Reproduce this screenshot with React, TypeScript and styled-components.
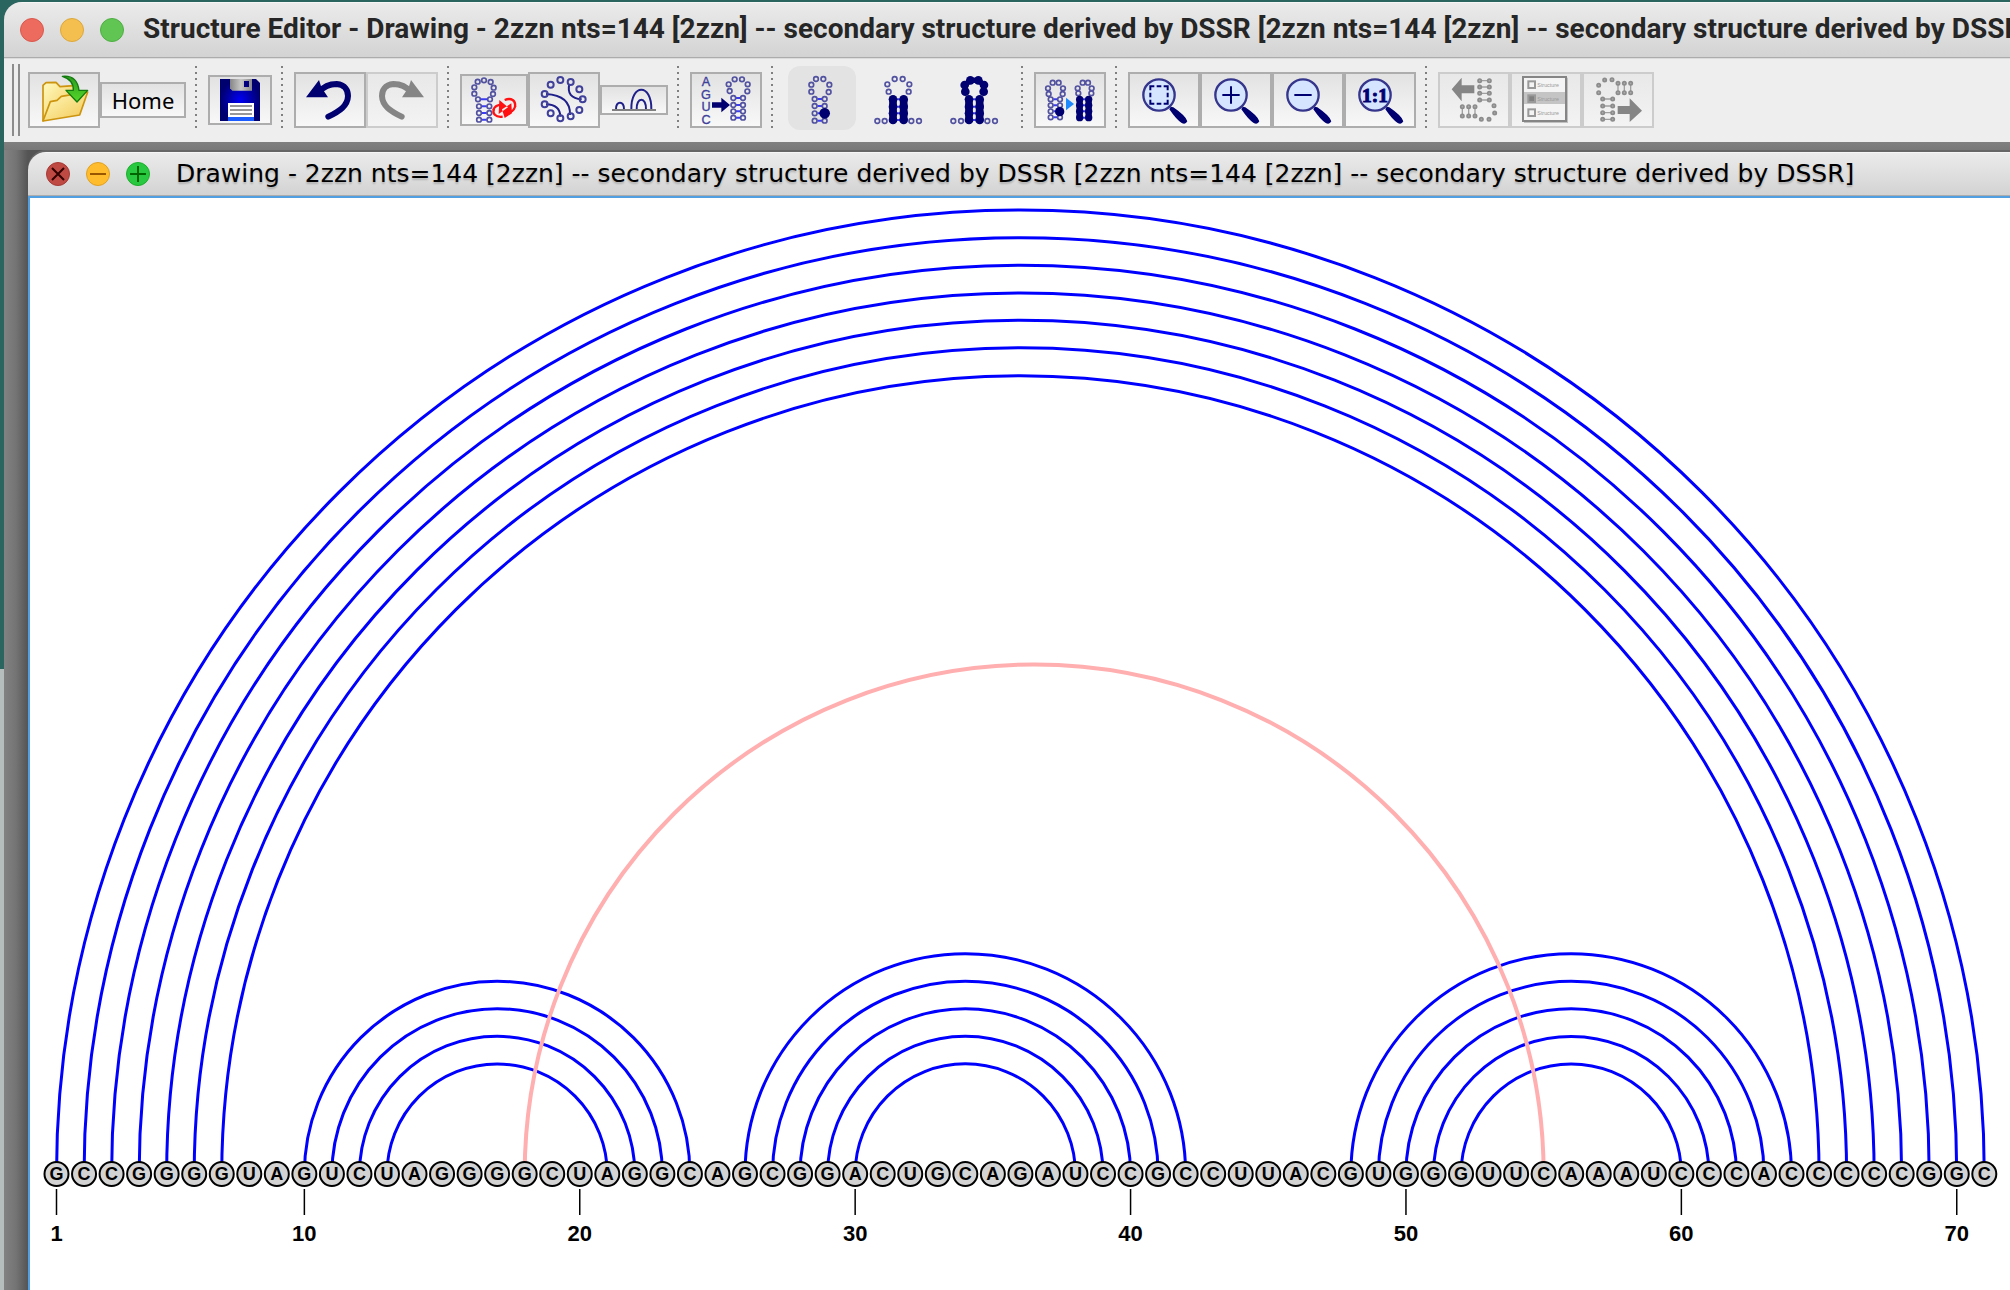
import React from "react";
import styled, { createGlobalStyle, css } from "styled-components";

const NAVY = "#000070";
const BEAD = "#5252a0";
const RUNG = "#3c3cf0";
const GREY = "#858585";

const GlobalStyle = createGlobalStyle`
  * { box-sizing: border-box; }
  body { margin: 0; overflow: hidden; }
`;

/* ---------- shell ---------- */

const Desktop = styled.div`
  display: flex;
  height: 100vh;
  padding: 2px 0 0 4px;
  background: linear-gradient(#2a6560 0 669px, #b6bdbd 669px);
  overflow: hidden;
`;

const AppWindow = styled.main`
  display: flex;
  flex-direction: column;
  flex: 1;
  min-width: 0;
  border-top-left-radius: 18px;
  background: #808080;
  overflow: hidden;
`;

const TitleBar = styled.header<{ $inner?: boolean }>`
  display: flex;
  align-items: center;
  gap: 16px;
  flex: none;
  height: ${(p) => (p.$inner ? 44 : 56)}px;
  padding-left: ${(p) => (p.$inner ? 18 : 16)}px;
  border-top: 1px solid #f6f6f6;
  border-bottom: 1px solid #acacac;
  background: linear-gradient(#ebebeb, #d3d3d3);
  overflow: hidden;
`;

const Light = styled.button<{ $fill: string; $edge: string }>`
  flex: none;
  display: grid;
  width: 24px;
  height: 24px;
  padding: 0;
  border: 1px solid ${(p) => p.$edge};
  border-radius: 50%;
  background: ${(p) => p.$fill};
`;

const WindowTitle = styled.h1`
  margin: 0 0 2px 3px;
  font: 700 28px/32px Roboto, "Liberation Sans", sans-serif;
  color: #262626;
  white-space: nowrap;
`;

const FrameTitle = styled.h2`
  margin: 0 0 0 10px;
  font: 400 25px/32px "DejaVu Sans", "Noto Sans", sans-serif;
  color: #000;
  text-shadow: 0 2px 2px rgba(0, 0, 0, 0.2);
  white-space: nowrap;
`;

/* ---------- toolbar ---------- */

const Toolbar = styled.div`
  display: flex;
  align-items: center;
  flex: none;
  height: 84px;
  padding: 0 0 1px 8px;
  border-top: 1px solid #dcdcdc;
  background: #eee;
`;

const Grip = styled.div`
  flex: none;
  width: 8px;
  height: 72px;
  margin-right: 8px;
  border: solid #8c8c8c;
  border-width: 0 2px;
`;

const Divider = styled.div`
  flex: none;
  width: 2px;
  height: 62px;
  margin: 0 11px 6px 9px;
  background: repeating-linear-gradient(#808080 0 2px, transparent 2px 6px);
`;

const Group = styled.div`
  display: flex;
  align-items: center;
  flex: none;
`;

const ModeGroup = styled(Group)`
  gap: 8px;
  margin: 0 4px 4px;
`;

const iconFill = css`
  & > svg { display: block; width: 100%; height: 100%; }
`;

const ToolButton = styled.button<{ $w?: number; $h?: number }>`
  flex: none;
  width: ${(p) => p.$w ?? 72}px;
  height: ${(p) => p.$h ?? 56}px;
  padding: 0;
  border: 2px solid #adadad;
  background: linear-gradient(#e2e2e2, #f8f8f8);
  font: 400 22px/28px "Noto Sans", "Open Sans", sans-serif;
  color: #000;
  ${iconFill}
  &:disabled { border-color: #cccccc; background: linear-gradient(#e8e8e8, #f3f3f3); }
`;

const ModeButton = styled.button<{ $on?: boolean }>`
  flex: none;
  width: 68px;
  height: 64px;
  padding: 0;
  border: 0;
  border-radius: 12px;
  background: ${(p) => (p.$on ? "#e3e3e3" : "transparent")};
  ${iconFill}
`;

/* ---------- document frame ---------- */

const Workspace = styled.section`
  display: flex;
  flex: 1;
  min-height: 0;
  padding: 10px 0 0 24px;
  background:
    linear-gradient(#808080, #787878) top / 100% 8px no-repeat,
    linear-gradient(90deg, #828282, #747474 12px, #545454 24px);
`;

const Frame = styled.article`
  display: flex;
  flex-direction: column;
  flex: 1;
  min-width: 0;
  border-top-left-radius: 18px;
  box-shadow: 0 -2px 0 #666;
  overflow: hidden;
`;

const Canvas = styled.div`
  flex: 1;
  min-height: 0;
  border: solid #519fe0;
  border-width: 2px 0 0 2px;
  background: #fff;
  overflow: hidden;
  & > svg { display: block; }
`;

const BaseLetter = styled.text`
  font: 700 18px "Liberation Sans", Arial, sans-serif;
  text-anchor: middle;
`;

const IndexLabel = styled.text`
  font: 700 22px "Liberation Sans", Arial, sans-serif;
  text-anchor: middle;
`;

/* ---------- icon parts ---------- */

type Pt = [number, number];

const Beads = ({ at, r = 7, color = BEAD, fill = "none", w = 5 }: { at: Pt[]; r?: number; color?: string; fill?: string; w?: number }) => (
  <g fill={fill} stroke={color} strokeWidth={w}>
    {at.map(([x, y]) => <circle key={`${x},${y}`} cx={x} cy={y} r={r} />)}
  </g>
);

const Rungs = ({ x1, x2, ys, color = RUNG }: { x1: number; x2: number; ys: number[]; color?: string }) => (
  <g stroke={color} strokeWidth="6">
    {ys.map((y) => <path key={y} d={`M${x1} ${y}H${x2}`} />)}
  </g>
);

const Stem = ({ x1, x2, ys }: { x1: number; x2: number; ys: number[] }) => (
  <>
    <Rungs x1={x1 + 8} x2={x2 - 8} ys={ys} />
    <Beads at={ys.flatMap((y): Pt[] => [[x1, y], [x2, y]])} />
  </>
);

const SolidStem = ({ x1, x2, ys, r }: { x1: number; x2: number; ys: number[]; r: number }) => (
  <>
    <path d={`M${x1} ${ys[0]}V${ys[ys.length - 1]}M${x2} ${ys[0]}V${ys[ys.length - 1]}`} stroke={NAVY} strokeWidth={r * 2 - 3} />
    <Rungs x1={x1} x2={x2} ys={ys} />
    <Beads at={ys.flatMap((y): Pt[] => [[x1, y], [x2, y]])} r={r} color="none" fill={NAVY} />
  </>
);

const OpenIcon = () => (
  <svg viewBox="90 222 204 156" aria-hidden="true">
    <defs>
      <linearGradient id="folder" x1="0" y1="0" x2="1" y2="1">
        <stop offset="0" stopColor="#fffbc0" /><stop offset="1" stopColor="#f2c652" />
      </linearGradient>
      <linearGradient id="arrow" x1="0" y1="0" x2="0" y2="1">
        <stop offset="0" stopColor="#2c9c1e" /><stop offset="1" stopColor="#55d92a" />
      </linearGradient>
    </defs>
    <g stroke="#cc940f" strokeWidth="5" strokeLinejoin="round">
      <path d="M129 362V256l9-8 30-1 12 13 42-3 4 20-66 70z" fill="url(#folder)" />
      <path d="M129 363l22-58 20-4 13-12 79-13-24 69z" fill="url(#folder)" />
    </g>
    <path d="M187 229c28-3 46 12 50 42h26l-32 35-33-35h22c1-18-8-34-33-42z" fill="url(#arrow)" stroke="#127a0e" strokeWidth="4" strokeLinejoin="round" />
  </svg>
);

const SaveIcon = () => (
  <svg viewBox="630 234 180 138" aria-hidden="true">
    <defs>
      <radialGradient id="disk"><stop offset="0" stopColor="#0000f5" /><stop offset="1" stopColor="#00006e" /></radialGradient>
      <linearGradient id="metal"><stop offset="0" stopColor="#858585" /><stop offset="0.5" stopColor="#c8c8c8" /><stop offset="1" stopColor="#8a8a8a" /></linearGradient>
    </defs>
    <path d="M660 240H768l12 12V366H660z" fill="url(#disk)" />
    <path d="M690 240H756V275H697l-7-7z" fill="url(#metal)" />
    <path d="M732 246h15v18h-15z" fill="#000080" />
    <path d="M684 312h78v42h-78z" fill="#fff" />
    <path d="M690 321h66M690 333h66M690 345h66" stroke="#777" strokeWidth="4" />
    <path d="M684 354h78v12h-78z" fill="#1a5cff" />
  </svg>
);

const TurnIcon = ({ color, flip }: { color: string; flip?: boolean }) => (
  <svg viewBox="888 222 204 156" aria-hidden="true">
    <g transform={flip ? "translate(2190 0) scale(-1 1)" : undefined}>
      <path d="M958 276C972 258 994 252 1010 252C1036 254 1044 272 1044 288C1043 318 1018 334 985 350" fill="none" stroke={color} strokeWidth="18" strokeLinecap="round" />
      <path d="M918 292L957 240L964 262L984 292z" fill={color} />
    </g>
  </svg>
);

const RefoldIcon = () => (
  <svg viewBox="66 78 192 144" fill="none" aria-hidden="true">
    <Beads at={[[113, 95], [132, 91], [152, 96], [161, 113], [159, 132], [150, 148], [103, 112], [103, 131], [114, 148]]} />
    <Rungs x1={122} x2={142} ys={[148]} />
    <Stem x1={117} x2={148} ys={[169, 189, 209]} />
    <g stroke="#f11" strokeWidth="7">
      <path d="M188 200C166 203 156 190 162 176" />
      <path d="M194 150C214 142 228 152 225 170" />
      <path d="M160 180C164 168 174 164 186 164" />
      <path d="M226 168C222 182 212 188 202 186" />
    </g>
    <path d="M178 150l26 22-28 20zM214 160l-28 18 8 26 22-14z" fill="#f11" />
  </svg>
);

const CircleIcon = () => (
  <svg viewBox="270 72 204 156" fill="none" aria-hidden="true">
    <path d="M318 132Q392 136 390 195M318 163Q360 164 361 200M388 102Q378 144 425 148" stroke="#20208a" strokeWidth="6" />
    <Beads r={9} w={6} color="#40409a" at={[[361, 90], [392, 96], [418, 118], [428, 148], [418, 180], [392, 199], [361, 205], [332, 190], [314, 163], [314, 132], [332, 104]]} />
  </svg>
);

const ArcIcon = () => (
  <svg viewBox="486 114 192 78" fill="none" aria-hidden="true">
    <path d="M528 182C526 154 554 154 552 182M574 182C572 102 636 102 634 182M590 182C588 142 620 142 618 182" stroke="#20208a" strokeWidth="6" />
    <path d="M516 183H648" stroke="#808080" strokeWidth="6" />
  </svg>
);

const IconLetter = styled.text`
  font: 400 38px "Liberation Sans", Arial, sans-serif;
  text-anchor: middle;
  fill: #40409a;
  stroke: #40409a;
  stroke-width: 1px;
`;

const SequenceIcon = () => (
  <svg viewBox="756 72 204 156" fill="none" aria-hidden="true">
    {["A", "G", "U", "C"].map((c, i) => <IconLetter key={c} x={798} y={108 + i * 38}>{c}</IconLetter>)}
    <path d="M816 157h28v-14l26 22-26 22v-14h-28z" fill={NAVY} />
    <Beads at={[[884, 88], [906, 88], [866, 103], [923, 103], [869, 123], [922, 124]]} />
    <Stem x1={880} x2={909} ys={[144, 165, 184, 203]} />
  </svg>
);

const OutlineMode = () => (
  <svg viewBox="24 48 204 192" fill="none" aria-hidden="true">
    <Beads at={[[108, 87], [130, 87], [94, 104], [148, 104], [94, 125], [146, 126]]} />
    <Stem x1={104} x2={134} ys={[147, 168, 190, 212]} />
    <circle cx="134" cy="190" r="16" fill={NAVY} />
  </svg>
);

const StemMode = () => (
  <svg viewBox="252 48 204 192" fill="none" aria-hidden="true">
    <Beads at={[[344, 87], [368, 87], [322, 103], [388, 103], [326, 125], [386, 125], [292, 213], [314, 213], [394, 213], [417, 213]]} />
    <SolidStem x1={339} x2={371} ys={[148, 170, 190, 210]} r={13} />
  </svg>
);

const SolidMode = () => (
  <svg viewBox="480 48 204 192" fill="none" aria-hidden="true">
    <Beads at={[[520, 213], [543, 213], [622, 213], [645, 213]]} />
    <path d="M556 126V104L571 91H595L611 104V126" stroke={NAVY} strokeWidth="16" />
    <Beads r={13} w={0} fill={NAVY} at={[[571, 91], [595, 91], [554, 105], [612, 105], [556, 125], [611, 125]]} />
    <SolidStem x1={567} x2={599} ys={[148, 170, 190, 210]} r={13} />
  </svg>
);

const ConvertIcon = () => (
  <svg viewBox="768 72 204 156" fill="none" aria-hidden="true">
    <Beads at={[[818, 98], [836, 98], [804, 115], [849, 115], [806, 132], [848, 132]]} />
    <Stem x1={812} x2={840} ys={[148, 166, 184, 202]} />
    <circle cx="839" cy="185" r="14" fill={NAVY} />
    <path d="M858 143l24 19-24 19z" fill="#1e88ff" />
    <Beads at={[[908, 98], [924, 98], [893, 115], [935, 115], [895, 130], [934, 130]]} />
    <SolidStem x1={899} x2={926} ys={[148, 166, 184, 203]} r={11} />
  </svg>
);

const RatioText = styled.text`
  font: 700 58px "Liberation Serif", "Times New Roman", serif;
  text-anchor: middle;
  fill: ${NAVY};
  stroke: ${NAVY};
  stroke-width: 3px;
`;

const Lens = ({ children }: { children: React.ReactNode }) => (
  <svg viewBox="6 6 204 156" fill="none" aria-hidden="true">
    <path d="M128 104L136 106Q174 132 178 148Q172 160 160 152Q146 144 124 112z" fill={NAVY} />
    <circle cx="93" cy="69" r="47" fill="#d5e5ff" stroke="#35358c" strokeWidth="7" />
    <g stroke={NAVY} strokeWidth="6">{children}</g>
  </svg>
);

const BackIcon = () => (
  <svg viewBox="6 6 204 156" fill="none" aria-hidden="true">
    <path d="M41 52l30-35v23h38v24H71v24z" fill={GREY} />
    <path d="M125 26h29M125 45h29M125 64h29M125 84h29M73 104v28M92 104v28M111 104v28" stroke="#a0a0a0" strokeWidth="4" />
    <Beads r={5} color="#8c8c8c" fill="#aaa" at={[[125, 26], [154, 26], [125, 45], [154, 45], [125, 64], [154, 64], [125, 84], [154, 84], [73, 104], [92, 104], [111, 104], [73, 132], [92, 132], [111, 132], [168, 101], [170, 123], [153, 142], [130, 142]]} />
  </svg>
);

const TinyText = styled.text`
  font: 400 16px "Liberation Sans", Arial, sans-serif;
  fill: #999;
`;

const ListIcon = () => (
  <svg viewBox="6 6 204 156" fill="none" aria-hidden="true">
    <path d="M42 17h132v136H42z" fill="#c0c0c0" />
    <path d="M39 15h129v132H39z" fill="#f4f4f4" stroke={GREY} strokeWidth="6" />
    <path d="M42 60h123v36H42z" fill="#c4c4c4" />
    {[38, 80, 122].map((y) => (
      <g key={y}>
        <rect x="55" y={y - 10} width="20" height="20" fill={y === 80 ? "#808080" : "#f4f4f4"} stroke="#999" strokeWidth="6" />
        <TinyText x="82" y={y + 6}>Structure</TinyText>
      </g>
    ))}
  </svg>
);

const ForwardIcon = () => (
  <svg viewBox="6 6 204 156" fill="none" aria-hidden="true">
    <path d="M107 102h36V79l37 37-37 34v-24h-36z" fill={GREY} />
    <path d="M62 81h30M62 102h30M62 122h30M62 142h30M108 34v28M127 34v28M146 34v28" stroke="#a0a0a0" strokeWidth="4" />
    <Beads r={5} color="#8c8c8c" fill="#aaa" at={[[68, 24], [90, 23], [50, 40], [50, 62], [108, 34], [127, 34], [146, 34], [108, 62], [127, 62], [146, 62], [62, 81], [92, 81], [62, 102], [92, 102], [62, 122], [92, 122], [62, 142], [92, 142]]} />
  </svg>
);

const Glyph = ({ d, color }: { d: string; color: string }) => (
  <svg width="22" height="22" viewBox="0 0 22 22" aria-hidden="true">
    <path d={d} stroke={color} strokeWidth="2" />
  </svg>
);

/* ---------- arc diagram ---------- */

const SEQUENCE = "GCCGGGGUAGUCUAGGGGCUAGGCAGCGGACUGCAGAUCCGCCUUACGUGGGUUCAAAUCCCACCCCCGGC";
const HELICES: { from: number; to: number; size: number; knot?: boolean }[] = [
  { from: 1, to: 71, size: 7 },
  { from: 10, to: 24, size: 4 },
  { from: 26, to: 42, size: 5 },
  { from: 48, to: 64, size: 5 },
  { from: 18, to: 55, size: 1, knot: true },
];
const TICKS = [1, 10, 20, 30, 40, 50, 60, 70];
const STEP = 27.54;
const BASELINE = 976;
const baseX = (n: number) => 26.5 + (n - 1) * STEP;

const ArcDiagram = () => (
  <svg width="1980" height="1092" role="img" aria-label="Arc diagram of 2zzn base pairs">
    <g fill="none">
      {HELICES.flatMap(({ from, to, size, knot }) =>
        Array.from({ length: size }, (_, i) => {
          const a = baseX(from + i);
          const b = baseX(to - i);
          const r = (b - a) / 2;
          return (
            <path
              key={`${from}-${i}`}
              d={`M${a} ${BASELINE}A${r} ${r} 0 0 1 ${b} ${BASELINE}`}
              stroke={knot ? "#ffafaf" : "#0000ff"}
              strokeWidth={knot ? 4 : 3}
            />
          );
        })
      )}
    </g>
    {SEQUENCE.split("").map((base, i) => (
      <g key={i}>
        <circle cx={baseX(i + 1)} cy={BASELINE} r="12" fill="#d3d3d3" stroke="#000" strokeWidth="2" />
        <BaseLetter x={baseX(i + 1)} y={BASELINE + 6}>{base}</BaseLetter>
      </g>
    ))}
    {TICKS.map((n) => (
      <g key={n}>
        <path d={`M${baseX(n)} ${BASELINE + 15}v26`} stroke="#000" strokeWidth="1.5" />
        <IndexLabel x={baseX(n)} y={BASELINE + 67}>{n}</IndexLabel>
      </g>
    ))}
  </svg>
);

const DOC = "Drawing - 2zzn nts=144 [2zzn] -- secondary structure derived by DSSR [2zzn nts=144 [2zzn] -- secondary structure derived by DSSR]";

export default function App() {
  return (
    <Desktop>
      <GlobalStyle />
      <AppWindow>
        <TitleBar>
          <Light $fill="#ed6a5e" $edge="#d9584d" aria-label="Close window" />
          <Light $fill="#f5bf4f" $edge="#dba73c" aria-label="Minimize window" />
          <Light $fill="#61c554" $edge="#4fae43" aria-label="Zoom window" />
          <WindowTitle>Structure Editor - {DOC}</WindowTitle>
        </TitleBar>

        <Toolbar role="toolbar" aria-label="Structure tools">
          <Grip />
          <Group>
            <ToolButton aria-label="Open"><OpenIcon /></ToolButton>
            <ToolButton $w={86} $h={36}>Home</ToolButton>
          </Group>
          <Divider />
          <ToolButton $w={64} $h={50} aria-label="Save"><SaveIcon /></ToolButton>
          <Divider />
          <Group>
            <ToolButton aria-label="Undo"><TurnIcon color={NAVY} /></ToolButton>
            <ToolButton aria-label="Redo" disabled>
              <svg viewBox="1104 222 204 156" aria-hidden="true">
                <path d="M1232 276C1218 258 1196 252 1180 252C1154 254 1146 272 1146 288C1147 318 1172 334 1205 350" fill="none" stroke={GREY} strokeWidth="18" strokeLinecap="round" />
                <path d="M1272 292L1233 240L1226 262L1206 292z" fill={GREY} />
              </svg>
            </ToolButton>
          </Group>
          <Divider />
          <Group>
            <ToolButton $w={68} $h={52} aria-label="Redraw"><RefoldIcon /></ToolButton>
            <ToolButton aria-label="Circular layout"><CircleIcon /></ToolButton>
            <ToolButton $w={68} $h={30} aria-label="Linear layout"><ArcIcon /></ToolButton>
          </Group>
          <Divider />
          <ToolButton aria-label="Sequence to structure"><SequenceIcon /></ToolButton>
          <Divider />
          <ModeGroup>
            <ModeButton $on aria-pressed="true" aria-label="Edit base"><OutlineMode /></ModeButton>
            <ModeButton aria-pressed="false" aria-label="Edit helix"><StemMode /></ModeButton>
            <ModeButton aria-pressed="false" aria-label="Edit branch"><SolidMode /></ModeButton>
          </ModeGroup>
          <Divider />
          <ToolButton aria-label="Expand selection"><ConvertIcon /></ToolButton>
          <Divider />
          <Group>
            <ToolButton aria-label="Zoom to fit">
              <Lens><path d="M67 55V43H79M86 43H100M107 43H119V55M119 62V76M119 83V95H107M100 95H86M79 95H67V83M67 76V62" /></Lens>
            </ToolButton>
            <ToolButton aria-label="Zoom in"><Lens><path d="M67 69H119M93 43V95" /></Lens></ToolButton>
            <ToolButton aria-label="Zoom out"><Lens><path d="M67 69H119" /></Lens></ToolButton>
            <ToolButton aria-label="Actual size"><Lens><RatioText x={93} y={89}>1:1</RatioText></Lens></ToolButton>
          </Group>
          <Divider />
          <Group>
            <ToolButton aria-label="Previous structure" disabled><BackIcon /></ToolButton>
            <ToolButton aria-label="Structure list" disabled><ListIcon /></ToolButton>
            <ToolButton aria-label="Next structure" disabled><ForwardIcon /></ToolButton>
          </Group>
        </Toolbar>

        <Workspace>
          <Frame>
            <TitleBar $inner>
              <Light $fill="#bf4943" $edge="#a63a35" aria-label="Close drawing"><Glyph d="M5 5L17 17M17 5L5 17" color="#330000" /></Light>
              <Light $fill="#ffbd2e" $edge="#dfa023" aria-label="Minimize drawing"><Glyph d="M3 11H19" color="#985700" /></Light>
              <Light $fill="#28c940" $edge="#1dad2b" aria-label="Maximize drawing"><Glyph d="M3 11H19M11 3V19" color="#006500" /></Light>
              <FrameTitle>{DOC}</FrameTitle>
            </TitleBar>
            <Canvas><ArcDiagram /></Canvas>
          </Frame>
        </Workspace>
      </AppWindow>
    </Desktop>
  );
}
